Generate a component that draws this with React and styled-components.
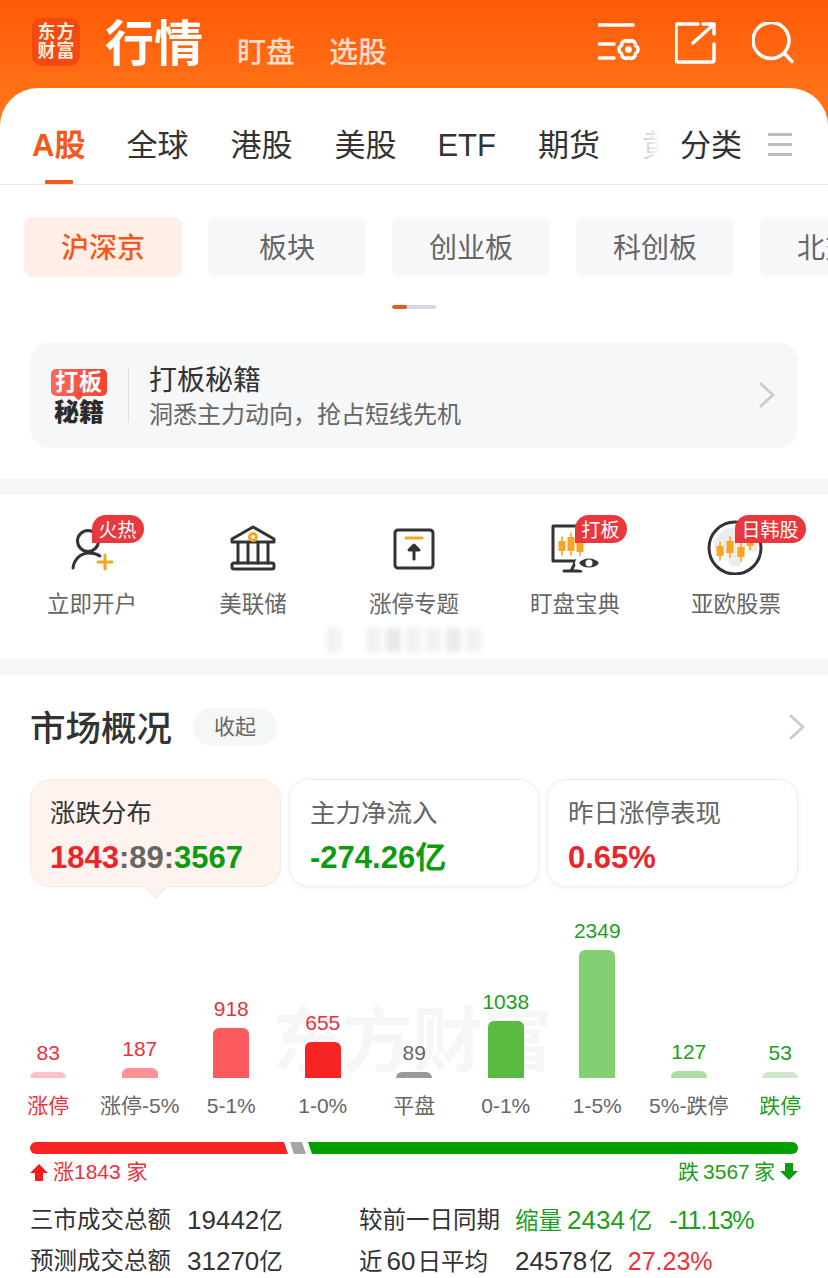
import React from "react";
import styled, { createGlobalStyle } from "styled-components";

const Global = createGlobalStyle`
  html, body { margin: 0; padding: 0; background: #fff; }
  body { width: 828px; height: 1278px; overflow: hidden; font-family: "Liberation Sans", "Noto Sans CJK SC", sans-serif; color: #333; }
  * { box-sizing: border-box; }
`;

const Page = styled.div`width: 828px; height: 1278px; overflow: hidden; background: #fff;`;
const Top = styled.div`background: linear-gradient(180deg, #ff5a08 0%, #ff7a1e 130px);`;
const Header = styled.header`display: flex; align-items: flex-start; height: 88px; padding: 18px 32px 0;`;
const Logo = styled.div`
  width: 48px; height: 48px; border-radius: 10px; background: #f4490f; color: #ffeede;
  display: grid; grid-template-columns: 19px 19px; justify-content: center; align-content: center;
  font-size: 18px; line-height: 19px; font-weight: 700; text-align: center;
`;
const Titles = styled.div`display: flex; align-items: flex-start; margin-left: 25px;`;
const Title = styled.h1`margin: 2px 0 0; font-size: 49px; line-height: 48px; font-weight: 700; color: #fff;`;
const SubNav = styled.span`font-size: 29px; line-height: 40px; color: rgba(255,255,255,.78); margin: 15px 0 0 ${p => p.$gap}px; font-weight: 500;`;
const HeadIcons = styled.div`display: flex; gap: 33px; margin-left: auto; margin-top: 4px;`;
const HeadSvg = styled.svg`width: 44px; height: 44px; fill: none; stroke: #fff; stroke-width: 3.5; stroke-linecap: round; stroke-linejoin: round;`;

const TabPanel = styled.nav`
  display: flex; height: 97px; background: #fff; border-radius: 38px 38px 0 0; border-bottom: 1px solid #e6e6e6;
`;
const TabScroll = styled.div`
  position: relative; display: flex; gap: 42px; width: 660px; padding-left: 32px; overflow: hidden; flex: none;
  &::after { content: ""; position: absolute; right: 0; top: 0; bottom: 0; width: 22px; background: linear-gradient(90deg, rgba(255,255,255,.65), #fff); }
`;
const Tab = styled.div`
  position: relative; flex: none; font-size: 31px; line-height: 40px; padding-top: 38px; margin-right: ${p => p.$mr || 0}px; color: ${p => (p.$active ? "#f4581a" : "#333")};
  font-weight: ${p => (p.$active ? 700 : 400)};
  ${p => p.$active && `&::after { content: ""; position: absolute; left: 13px; width: 28px; height: 4px; top: 92px; background: #f4581a; border-radius: 1px; }`}
`;
const CatTab = styled.div`margin-left: 20px; font-size: 31px; line-height: 40px; padding-top: 38px; color: #333;`;
const Burger = styled.div`
  margin-left: 26px; margin-top: 45px; width: 24px; height: 23px; display: flex; flex-direction: column; justify-content: space-between;
  & > i { display: block; height: 3px; background: #bdbdbd; }
`;

const SubTabs = styled.div`display: flex; gap: 26px; padding: 32px 0 0 24px; overflow: hidden; width: 828px;`;
const SubTab = styled.div`
  flex: 0 0 158px; height: 60px; padding-bottom: 2px; border-radius: 8px; display: flex; align-items: center; justify-content: center; font-size: 28px;
  background: ${p => (p.$active ? "#ffefe6" : "#f8f8fa")}; color: ${p => (p.$active ? "#f4581a" : "#666")};
  font-weight: ${p => (p.$active ? 500 : 400)};
`;
const Track = styled.div`width: 44px; height: 4px; margin: 28px auto 0; background: #d5d8e0; border-radius: 2px; overflow: hidden;`;
const Thumb = styled.div`width: 15px; height: 4px; background: #e8591a; border-radius: 2px;`;

const Banner = styled.div`
  display: flex; align-items: center; height: 106px; margin: 33px 30px 31px; padding-left: 21px; background: #f6f7f9; border-radius: 20px;
`;
const BannerLogo = styled.div`width: 56px; margin-top: 3px; display: flex; flex-direction: column; align-items: center;`;
const Bubble = styled.div`
  position: relative; width: 56px; height: 27px; border-radius: 5px; background: linear-gradient(90deg, #fb6a5a, #f4432f); color: #fff;
  font-size: 23px; line-height: 27px; font-weight: 700; text-align: center; letter-spacing: 1px;
  &::after { content: ""; position: absolute; left: 24px; bottom: -3px; width: 7px; height: 7px; background: #f4503e; transform: rotate(45deg); }
`;
const BannerWord = styled.div`font-size: 25px; line-height: 26px; font-weight: 900; color: #2b2b2b; margin-top: 3px;`;
const VLine = styled.div`width: 1px; height: 54px; background: #dedfe3; margin: 0 20px 0 21px;`;
const BannerText = styled.div`display: flex; flex-direction: column; margin-top: 4px;`;
const BannerTitle = styled.div`font-size: 28px; line-height: 36px; color: #333;`;
const BannerSub = styled.div`font-size: 24px; line-height: 32px; color: #666;`;
const Chevron = styled.svg`
  width: 16px; height: 26px; fill: none; stroke: #ccc; stroke-width: 3; stroke-linecap: round; stroke-linejoin: round; margin-left: auto; margin-right: ${p => p.$mr || 0}px;
`;
const Band = styled.div`height: 16px; background: #f5f6f8;`;

const IconRow = styled.div`position: relative; display: grid; grid-template-columns: repeat(5, 161px); padding-left: 11.5px; height: 164px;`;
const IconCell = styled.div`position: relative; display: flex; flex-direction: column; align-items: center; padding-top: 20px;`;
const CellSvg = styled.svg`width: 60px; height: 60px; fill: none; stroke: #333; stroke-width: 3; stroke-linecap: round; stroke-linejoin: round;`;
const CellLabel = styled.div`font-size: 22.5px; line-height: 28px; color: #666; margin-top: 16px;`;
const Badge = styled.span`
  position: absolute; top: 20px; left: ${p => p.$l}px; height: 28px; padding: 0 7px; border-radius: 14px 14px 14px 0; background: #e8383d; color: #fff;
  font-size: 19px; line-height: 31px; white-space: nowrap;
`;
const Smudge = styled.div`
  position: absolute; left: 326px; top: 133px; display: flex; gap: 5px; filter: blur(2.5px); opacity: .8;
  & > i { display: block; height: 24px; width: 15px; background: #eeeeee; }
  & > i:nth-child(2) { background: #fff; }
  & > i:nth-child(4) { background: #e3e3e3; }
  & > i:nth-child(7) { background: #e6e6e6; }
`;

const Section = styled.section`position: relative; padding: 33px 30px 0;`;
const SecHead = styled.div`display: flex; align-items: center; height: 38px;`;
const SecTitle = styled.h2`margin: 0; padding-top: 3px; font-size: 35.5px; line-height: 40px; font-weight: 500; color: #333;`;
const Pill = styled.span`margin-left: 21px; width: 84px; height: 38px; border-radius: 19px; background: #f5f6f8; color: #666; font-size: 21px; line-height: 38px; text-align: center;`;
const Cards = styled.div`display: grid; grid-template-columns: 251px 250px 251px; gap: 8px; margin-top: 33px;`;
const Card = styled.div`
  position: relative; height: 108px; padding: 16px 19px 0 20px; border-radius: 20px;
  background: ${p => (p.$active ? "#fef3ee" : "#fff")}; border: 1px solid ${p => (p.$active ? "#fbe8df" : "#eeeeee")};
  box-shadow: ${p => (p.$active ? "none" : "0 1px 6px rgba(0,0,0,.06)")};
  ${p => p.$active && `padding-left: 19px; &::after { content: ""; position: absolute; left: 115px; bottom: -10px; width: 18px; height: 18px; background: #fef3ee; border-right: 1px solid #fbe8df; border-bottom: 1px solid #fbe8df; transform: rotate(45deg) scale(.9); }`}
`;
const CardTitle = styled.div`font-size: 25.5px; line-height: 34px; color: ${p => (p.$active ? "#333" : "#666")};`;
const CardValue = styled.div`font-size: 31px; line-height: 42px; margin-top: 7px; font-weight: 700; color: ${p => p.$c || "#333"};`;
const Colored = styled.span`color: ${p => p.$c};`;

const Chart = styled.div`position: relative; display: grid; grid-template-columns: repeat(9, 91.5px); height: 231px; margin-left: -27.5px; align-items: end;`;
const Watermark = styled.div`position: absolute; left: 270px; top: 110px; font-size: 70px; line-height: 90px; font-weight: 700; color: #f6f6f6; white-space: nowrap;`;
const Col = styled.div`position: relative; display: flex; flex-direction: column; align-items: center;`;
const ColVal = styled.div`font-size: 21px; line-height: 24px; margin-bottom: 7px; color: ${p => p.$c};`;
const Bar = styled.div`width: 36px; border-radius: 6px 6px 0 0; background: ${p => p.$c}; height: ${p => p.$h}px;`;
const ColLabel = styled.div`font-size: 21px; line-height: 24px; margin-top: 16px; white-space: nowrap; color: ${p => p.$c};`;

const Progress = styled.div`display: flex; height: 12px; margin-top: 24px;`;
const Seg = styled.div`height: 12px;`;
const RedSeg = styled(Seg)`width: 258px; background: #f72424; border-radius: 6px 0 0 6px; clip-path: polygon(0 0, calc(100% - 4px) 0, 100% 100%, 0 100%);`;
const GraySeg = styled(Seg)`width: 16px; margin-left: 2px; background: #a5a5a5; clip-path: polygon(0 0, 12px 0, 100% 100%, 4px 100%);`;
const GreenSeg = styled(Seg)`flex: 1; margin-left: 2px; background: #009f00; border-radius: 0 6px 6px 0; clip-path: polygon(0 0, 100% 0, 100% 100%, 4px 100%);`;

const Counts = styled.div`display: flex; justify-content: space-between; height: 24px; margin-top: 6px; font-size: 21px; line-height: 24px;`;
const Count = styled.div`display: flex; align-items: center; gap: 5px; color: ${p => p.$c};`;
const ArrowSvg = styled.svg`width: 18px; height: 18px; fill: ${p => p.$c};`;

const Stats = styled.div`display: grid; grid-template-columns: 157px 172px 156px 1fr; margin-top: 16px; font-size: 23.5px; line-height: 40px; color: #333;`;
const Stat = styled.div`white-space: nowrap; color: ${p => p.$c || "#333"};`;
const Num = styled.span`font-size: 26px; color: ${p => p.$c || "inherit"}; margin: 0 ${p => p.$mr || 0}px 0 ${p => p.$ml || 0}px;`;
const Pct = styled.span`font-size: 25px; letter-spacing: ${p => p.$ls || 0}px; color: ${p => p.$c || "inherit"}; margin-left: ${p => p.$ml || 0}px;`;

const RED = "#e8323c", GREEN = "#1d9e1d", GRAY = "#666";

const bars = [
  { v: "83", h: 6, c: "#ffc0c8", l: "涨停", vc: RED, lc: RED },
  { v: "187", h: 10, c: "#ff9197", l: "涨停-5%", vc: RED, lc: GRAY },
  { v: "918", h: 50, c: "#fb5a5f", l: "5-1%", vc: RED, lc: GRAY },
  { v: "655", h: 36, c: "#f72424", l: "1-0%", vc: RED, lc: GRAY },
  { v: "89", h: 6, c: "#999999", l: "平盘", vc: GRAY, lc: GRAY },
  { v: "1038", h: 57, c: "#59ba42", l: "0-1%", vc: GREEN, lc: GRAY },
  { v: "2349", h: 128, c: "#84cf72", l: "1-5%", vc: GREEN, lc: GRAY },
  { v: "127", h: 7, c: "#aedca2", l: "5%-跌停", vc: GREEN, lc: GRAY },
  { v: "53", h: 6, c: "#cfeac8", l: "跌停", vc: GREEN, lc: GREEN },
];

const O = "#f6a623";
const Candle = ({ x, y, h = 14 }) => (
  <g>
    <path d={`M${x} ${y - h / 2 - 4}V${y + h / 2 + 4}`} stroke={O} strokeWidth="1.6" />
    <rect x={x - 3.5} y={y - h / 2} width="7" height={h} fill={O} stroke="none" />
  </g>
);

export default function App() {
  return (
    <Page>
      <Global />
      <Top>
        <Header>
          <Logo><span>东</span><span>方</span><span>财</span><span>富</span></Logo>
          <Titles>
            <Title>行情</Title>
            <SubNav $gap={34}>盯盘</SubNav>
            <SubNav $gap={34}>选股</SubNav>
          </Titles>
          <HeadIcons>
            <HeadSvg viewBox="0 0 44 44">
              <path d="M1 3H35M1 22H16M1 36H16" />
              <path d="M30.5 19.5A4.4 4.4 0 0 1 37.43 23.5A4.4 4.4 0 0 1 37.43 31.5A4.4 4.4 0 0 1 30.5 35.5A4.4 4.4 0 0 1 23.57 31.5A4.4 4.4 0 0 1 23.57 23.5A4.4 4.4 0 0 1 30.5 19.5Z" />
              <circle cx="30.5" cy="27.5" r="1.6" fill="#fff" />
            </HeadSvg>
            <HeadSvg viewBox="0 0 44 44">
              <path d="M23 2H3a2 2 0 0 0-2 2V38a2 2 0 0 0 2 2H37a2 2 0 0 0 2-2V22" />
              <path d="M18 21L38 3M28 2H39V12" />
            </HeadSvg>
            <HeadSvg viewBox="0 0 44 44">
              <circle cx="19" cy="18.5" r="18" />
              <path d="M32 31L40 39.5" />
            </HeadSvg>
          </HeadIcons>
        </Header>
        <TabPanel>
          <TabScroll>
            <Tab $active $mr={-1}>A股</Tab>
            <Tab>全球</Tab>
            <Tab>港股</Tab>
            <Tab $mr={-1}>美股</Tab>
            <Tab>ETF</Tab>
            <Tab>期货</Tab>
            <Tab>黄金</Tab>
          </TabScroll>
          <CatTab>分类</CatTab>
          <Burger><i /><i /><i /></Burger>
        </TabPanel>
      </Top>

      <SubTabs>
        <SubTab $active>沪深京</SubTab>
        <SubTab>板块</SubTab>
        <SubTab>创业板</SubTab>
        <SubTab>科创板</SubTab>
        <SubTab>北交所</SubTab>
      </SubTabs>
      <Track><Thumb /></Track>

      <Banner>
        <BannerLogo>
          <Bubble>打板</Bubble>
          <BannerWord>秘籍</BannerWord>
        </BannerLogo>
        <VLine />
        <BannerText>
          <BannerTitle>打板秘籍</BannerTitle>
          <BannerSub>{"洞悉主力动向\uFF0C抢占短线先机"}</BannerSub>
        </BannerText>
        <Chevron $mr={23} viewBox="0 0 16 26"><path d="M2 2L14 13L2 24" /></Chevron>
      </Banner>
      <Band />

      <IconRow>
        <IconCell>
          <CellSvg viewBox="0 0 60 60">
            <circle cx="26" cy="26" r="10.5" />
            <path d="M11 53c1-9 8-15 16-15 4 0 8 1 11 3" />
            <path d="M43 40V54M36 47H50" stroke={O} />
          </CellSvg>
          <CellLabel>立即开户</CellLabel>
          <Badge $l={80}>火热</Badge>
        </IconCell>
        <IconCell>
          <CellSvg viewBox="0 0 60 60">
            <path d="M30 12L9 24V27H51V24Z" />
            <circle cx="30" cy="22" r="3.5" stroke={O} />
            <path d="M15 28V48M25 28V48M35 28V48M45 28V48" />
            <rect x="9" y="48" width="42" height="6" rx="2" />
          </CellSvg>
          <CellLabel>美联储</CellLabel>
        </IconCell>
        <IconCell>
          <CellSvg viewBox="0 0 60 60">
            <rect x="11" y="15" width="38" height="38" rx="3" />
            <path d="M22 23H38" stroke={O} />
            <path d="M30 30L25 35H35ZM30 33V44" fill="#333" />
          </CellSvg>
          <CellLabel>涨停专题</CellLabel>
        </IconCell>
        <IconCell>
          <CellSvg viewBox="0 0 60 60">
            <path d="M54 46H8V11H54" />
            <path d="M31 46L26 56M19 56H36" />
            <Candle x={17} y={31} h={10} />
            <Candle x={26} y={29} h={14} />
            <Candle x={35} y={32} h={10} />
            <ellipse cx="44" cy="48" rx="14" ry="9" fill="#fff" stroke="none" />
            <path d="M34 48C38 42 50 42 54 48C50 54 38 54 34 48Z" fill="#333" stroke="none" />
            <circle cx="44" cy="48" r="3.5" fill="#fff" stroke="none" />
          </CellSvg>
          <CellLabel>盯盘宝典</CellLabel>
          <Badge $l={80}>打板</Badge>
        </IconCell>
        <IconCell>
          <CellSvg viewBox="0 0 60 60">
            <circle cx="29" cy="33" r="26" fill="#fff" />
            <path d="M8 26L18 14L34 12L30 24L40 30L34 52L24 50L20 38L8 36Z" fill="#ececec" stroke="none" />
            <path d="M42 18L52 26L50 38L42 34Z" fill="#ececec" stroke="none" />
            <Candle x={14} y={36} h={10} />
            <Candle x={24} y={32} h={12} />
            <Candle x={35} y={37} h={10} />
            <Candle x={44} y={26} h={10} />
          </CellSvg>
          <CellLabel>亚欧股票</CellLabel>
          <Badge $l={79}>日韩股</Badge>
        </IconCell>
        <Smudge><i /><i /><i /><i /><i /><i /><i /><i /></Smudge>
      </IconRow>
      <Band />

      <Section>
        <SecHead>
          <SecTitle>市场概况</SecTitle>
          <Pill>收起</Pill>
          <Chevron $mr={-7} viewBox="0 0 16 26"><path d="M2 2L14 13L2 24" /></Chevron>
        </SecHead>
        <Cards>
          <Card $active>
            <CardTitle $active>涨跌分布</CardTitle>
            <CardValue>
              <Colored $c="#e8262c">1843</Colored><Colored $c="#666">:89:</Colored><Colored $c="#0f9b0f">3567</Colored>
            </CardValue>
          </Card>
          <Card>
            <CardTitle>主力净流入</CardTitle>
            <CardValue $c="#0f9b0f">-274.26亿</CardValue>
          </Card>
          <Card>
            <CardTitle>昨日涨停表现</CardTitle>
            <CardValue $c="#e8262c">0.65%</CardValue>
          </Card>
        </Cards>
        <Chart>
          <Watermark>东方财富</Watermark>
          {bars.map(b => (
            <Col key={b.l}>
              <ColVal $c={b.vc}>{b.v}</ColVal>
              <Bar $c={b.c} $h={b.h} />
              <ColLabel $c={b.lc}>{b.l}</ColLabel>
            </Col>
          ))}
        </Chart>
        <Progress><RedSeg /><GraySeg /><GreenSeg /></Progress>
        <Counts>
          <Count $c={RED}>
            <ArrowSvg $c="#f11c1c" viewBox="0 0 18 18"><path d="M9 1L18 10H13V18H5V10H0Z" /></ArrowSvg>
            涨1843 家
          </Count>
          <Count $c={GREEN}>
            跌{"\u20093567\u2009"}家
            <ArrowSvg $c="#0f9b0f" viewBox="0 0 18 18"><path d="M9 17L18 8H13V0H5V8H0Z" /></ArrowSvg>
          </Count>
        </Counts>
        <Stats>
          <Stat>三市成交总额</Stat>
          <Stat><Num>19442</Num>亿</Stat>
          <Stat>较前一日同期</Stat>
          <Stat $c={GREEN}>缩量<Num $ml={5} $mr={4}>2434</Num>亿<Pct $ml={17} $ls={-1}>-11.13%</Pct></Stat>
          <Stat>预测成交总额</Stat>
          <Stat><Num>31270</Num>亿</Stat>
          <Stat>近<Num $ml={4} $mr={2}>60</Num>日平均</Stat>
          <Stat><Num $mr={2}>24578</Num>亿<Pct $ml={15} $c={RED}>27.23%</Pct></Stat>
        </Stats>
      </Section>
    </Page>
  );
}
